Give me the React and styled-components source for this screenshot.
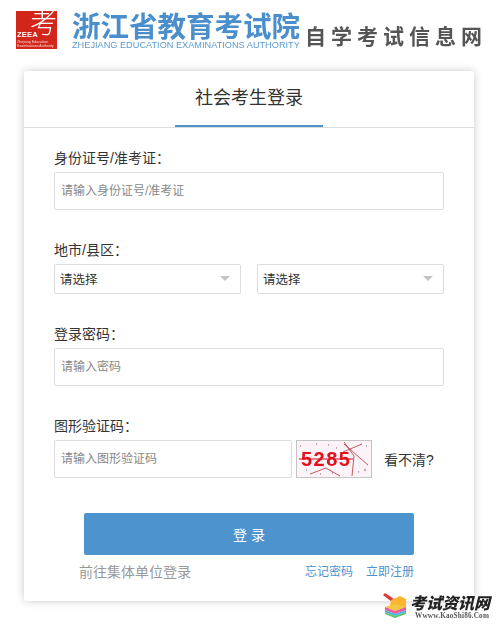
import React from "react";
import styled, { createGlobalStyle } from "styled-components";

const GlobalStyle = createGlobalStyle`
  html, body {
    margin: 0;
    padding: 0;
    background: #fff;
  }
  * {
    box-sizing: border-box;
  }
`;

const Page = styled.div`
  position: relative;
  width: 499px;
  height: 628px;
  overflow: hidden;
  font-family: "Liberation Sans", "Noto Sans CJK SC", sans-serif;
  color: #333;
`;

/* ================= HEADER ================= */

const Header = styled.header`
  display: flex;
  height: 71px;
  padding: 11px 0 0 16px;
`;

const LogoMark = styled.div`
  position: relative;
  flex: none;
  width: 41px;
  height: 38px;
  background: #d3261a;
  filter: blur(0.3px);
`;

const LogoGlyph = styled.span`
  position: absolute;
  top: -4px;
  right: 0;
  font-size: 27px;
  font-weight: 300;
  line-height: 30px;
  color: #fff;
  font-family: "Noto Sans CJK SC", sans-serif;
`;

const LogoCode = styled.span`
  position: absolute;
  left: 1px;
  top: 19px;
  font-size: 7.5px;
  font-weight: 700;
  letter-spacing: 0.2px;
  color: #fff;
`;

const LogoSmall = styled.span`
  position: absolute;
  left: 1px;
  top: 30px;
  font-size: 3.6px;
  line-height: 3.6px;
  color: #f6d5d0;
  white-space: nowrap;
`;

const Brand = styled.div`
  flex: none;
  margin-left: 15px;
  width: 232px;
  filter: blur(0.25px);
`;

const BrandName = styled.div`
  font-family: "Noto Sans CJK SC", sans-serif;
  font-size: 28.5px;
  font-weight: 700;
  line-height: 28px;
  height: 28px;
  color: #4a8fcb;
  white-space: nowrap;
`;

const BrandEnglish = styled.div`
  font-size: 9.2px;
  line-height: 12px;
  color: #5c9bd1;
  white-space: nowrap;
`;

const Slogan = styled.div`
  flex: none;
  margin: 11px 0 0 1px;
  font-family: "Noto Sans CJK SC", sans-serif;
  font-size: 21px;
  line-height: 26px;
  height: 26px;
  font-weight: 700;
  letter-spacing: 5px;
  color: #555;
  white-space: nowrap;
  filter: blur(0.35px);
`;

/* ================= CARD ================= */

const Card = styled.main`
  width: 450px;
  height: 530px;
  margin-left: 24px;
  background: #fff;
  border-radius: 2px;
  box-shadow: 0 0 8px rgba(0, 0, 0, 0.22);
`;

const Tabs = styled.div`
  display: flex;
  justify-content: center;
  height: 57px;
  border-bottom: 1px solid #ddd;
`;

const Tab = styled.div`
  width: 148px;
  height: 56px;
  border-bottom: 2px solid #4d93cd;
  text-align: center;
  font-size: 18px;
  line-height: 54px;
  color: #333;
`;

const Form = styled.form`
  display: flex;
  flex-direction: column;
  padding: 20px 30px 0;
`;

const Field = styled.div`
  display: flex;
  flex-direction: column;
  margin-bottom: 30px;
`;

const Label = styled.label`
  font-size: 14px;
  line-height: 20px;
  height: 24px;
  color: #333;
`;

const TextBox = styled.input`
  width: ${({ $width }) => $width || "100%"};
  height: 38px;
  padding: 0 6px;
  border: 1px solid #ddd;
  border-radius: 2px;
  outline: none;
  background: #fff;
  font-family: inherit;
  font-size: 12px;
  color: #333;

  &::placeholder {
    color: #888;
    opacity: 1;
  }
`;

const SelectRow = styled.div`
  display: grid;
  grid-template-columns: 187px 187px;
  column-gap: 16px;
`;

const Select = styled.div`
  display: flex;
  align-items: center;
  justify-content: space-between;
  height: 30px;
  padding: 0 10px 2px 5px;
  border: 1px solid #ddd;
  border-radius: 2px;
  font-size: 12.5px;
  color: #333;
`;

const Caret = styled.span`
  width: 0;
  height: 0;
  border-style: solid;
  border-width: 5px 5px 0;
  border-color: #c4c4c4 transparent transparent;
`;

const CaptchaRow = styled.div`
  display: flex;
  align-items: center;
`;

const CaptchaImage = styled.svg`
  flex: none;
  width: 76px;
  height: 38px;
  margin-left: 4px;
  filter: blur(0.2px);
`;

const Refresh = styled.span`
  margin-left: 12px;
  font-size: 14px;
  color: #333;
  white-space: nowrap;
`;

const Submit = styled.button`
  align-self: center;
  width: 330px;
  height: 42px;
  margin-top: 5px;
  border: 0;
  border-radius: 2px;
  background: #4d93cd;
  font-family: inherit;
  font-size: 14px;
  color: #fff;
`;

const Links = styled.div`
  display: flex;
  align-items: center;
  justify-content: space-between;
  width: 335px;
  margin: 7px 0 0 25px;
`;

const GroupLink = styled.a`
  font-size: 14px;
  line-height: 20px;
  color: #999;
`;

const LinkGroup = styled.div`
  display: flex;
  gap: 13px;
`;

const SmallLink = styled.a`
  font-size: 12px;
  line-height: 20px;
  color: #4d93cd;
`;

/* ================= WATERMARK ================= */

const Watermark = styled.div`
  position: absolute;
  left: 382px;
  top: 592px;
  display: flex;
  width: 117px;
  filter: blur(0.2px);
`;

const WatermarkIcon = styled.svg`
  flex: none;
  width: 26px;
  height: 26px;
`;

const WatermarkText = styled.div`
  display: flex;
  flex-direction: column;
  margin-left: 2px;
  padding-top: 1px;
`;

const WatermarkName = styled.div`
  font-family: "Noto Sans CJK SC", sans-serif;
  font-size: 16px;
  font-weight: 900;
  font-style: italic;
  line-height: 19px;
  color: #222;
  white-space: nowrap;
`;

const WatermarkUrl = styled.div`
  margin-left: 5px;
  font-family: "Liberation Serif", serif;
  font-size: 7.2px;
  font-weight: 700;
  line-height: 9px;
  letter-spacing: 0.2px;
  color: #555;
  white-space: nowrap;
`;

const App = () => {
  return (
    <Page>
      <GlobalStyle />
      <Header>
        <LogoMark>
          <LogoGlyph>考</LogoGlyph>
          <LogoCode>ZEEA</LogoCode>
          <LogoSmall>
            Zhejiang Education
            <br />
            Examinations Authority
          </LogoSmall>
        </LogoMark>
        <Brand>
          <BrandName>浙江省教育考试院</BrandName>
          <BrandEnglish>ZHEJIANG EDUCATION EXAMINATIONS AUTHORITY</BrandEnglish>
        </Brand>
        <Slogan>自学考试信息网</Slogan>
      </Header>

      <Card>
        <Tabs>
          <Tab>社会考生登录</Tab>
        </Tabs>
        <Form onSubmit={(e) => e.preventDefault()}>
          <Field>
            <Label>身份证号/准考证：</Label>
            <TextBox placeholder="请输入身份证号/准考证" />
          </Field>
          <Field>
            <Label>地市/县区：</Label>
            <SelectRow>
              <Select>
                请选择
                <Caret />
              </Select>
              <Select>
                请选择
                <Caret />
              </Select>
            </SelectRow>
          </Field>
          <Field>
            <Label>登录密码：</Label>
            <TextBox placeholder="请输入密码" />
          </Field>
          <Field>
            <Label>图形验证码：</Label>
            <CaptchaRow>
              <TextBox $width="238px" placeholder="请输入图形验证码" />
              <CaptchaImage viewBox="0 0 76 38">
                <rect x="0.5" y="0.5" width="75" height="37" fill="#fbf3f8" stroke="#c4c4c4" />
                <text
                  x="5"
                  y="26"
                  fontFamily="Liberation Sans"
                  fontSize="20"
                  fontWeight="700"
                  letterSpacing="1.5"
                  fill="#e3101c"
                >
                  5285
                </text>
                <path d="M3 19 L57 19" stroke="#d0101c" strokeWidth="1.2" />
                <path
                  d="M48 4 L72 25 M48 2 L58 16 L56 36 M47 12 L66 4 M14 34 L30 28 L44 36"
                  stroke="#b5303a"
                  strokeWidth="0.8"
                  fill="none"
                />
                <path
                  d="M4 6h1M20 4h1M32 5h1M40 8h1M68 30h2M62 32h1M24 34h1M36 33h1M10 30h1M70 6h1"
                  stroke="#8a5a6a"
                  strokeWidth="1.2"
                />
              </CaptchaImage>
              <Refresh>看不清?</Refresh>
            </CaptchaRow>
          </Field>
          <Submit type="button">登 录</Submit>
          <Links>
            <GroupLink>前往集体单位登录</GroupLink>
            <LinkGroup>
              <SmallLink>忘记密码</SmallLink>
              <SmallLink>立即注册</SmallLink>
            </LinkGroup>
          </Links>
        </Form>
      </Card>

      <Watermark>
        <WatermarkIcon viewBox="0 0 26 26">
          <path d="M1 3 L3 1 L12 7 L10 10 Z" fill="#e03535" />
          <path d="M9 8 L18 4 L24 7 L24 15 L14 18 L8 14 Z" fill="#f7b531" />
          <path d="M3 15 L13 12 L24 15 L13 19 Z" fill="#f4c63c" />
          <path d="M3 15 L13 19 L24 15 L24 18 L13 22 L3 18 Z" fill="#ee5a9a" />
          <path d="M3 18 L13 22 L24 18 L24 20 L13 24 L3 20 Z" fill="#45b4e6" />
          <path d="M3 20 L13 24 L24 20 L24 22 L13 26 L3 22 Z" fill="#5cc46a" />
        </WatermarkIcon>
        <WatermarkText>
          <WatermarkName>考试资讯网</WatermarkName>
          <WatermarkUrl>Wwww.KaoShi86.Com</WatermarkUrl>
        </WatermarkText>
      </Watermark>
    </Page>
  );
};

export default App;
